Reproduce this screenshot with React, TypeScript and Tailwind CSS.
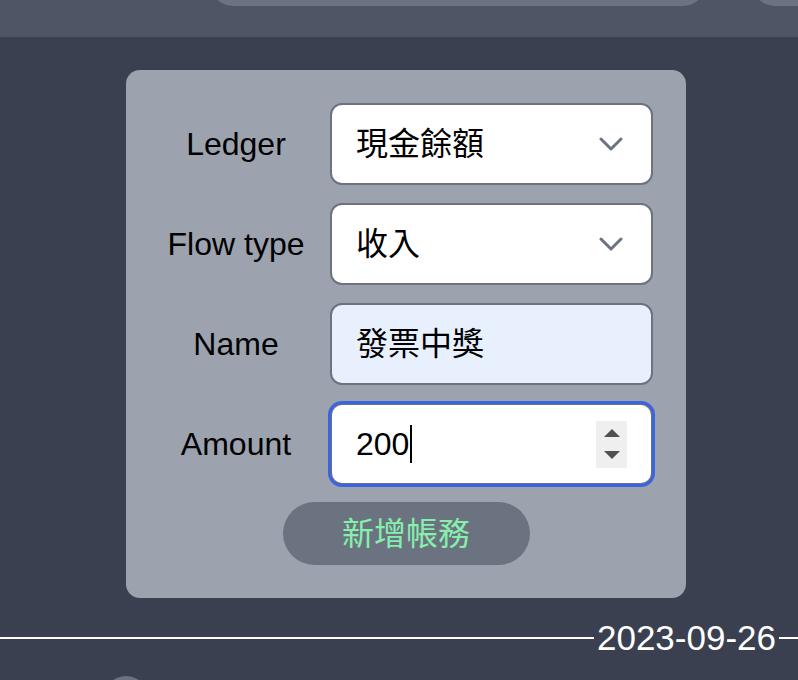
import React from 'react';

const font = { fontFamily: '"Liberation Sans", "Noto Sans CJK TC", sans-serif' };

const Chevron = () => (
    <svg width="24" height="14" viewBox="0 0 24 14" fill="none" className="shrink-0">
        <path d="M2 2l10 10L22 2" stroke="#6b7280" strokeWidth="3" strokeLinecap="round" strokeLinejoin="round" />
    </svg>
);

const Spinner = () => (
    <div className="w-[31px] h-[47px] bg-[#efefef] flex flex-col items-center justify-center gap-[14px]">
        <svg width="16" height="8" viewBox="0 0 16 8"><path d="M8 0L16 8H0z" fill="#505050" /></svg>
        <svg width="16" height="8" viewBox="0 0 16 8"><path d="M0 0h16L8 8z" fill="#505050" /></svg>
    </div>
);

const Row: React.FC<{ label: string; children: React.ReactNode }> = ({ label, children }) => (
    <div className="flex items-center">
        <div className="w-[188px] text-center text-[32px] text-black">{label}</div>
        {children}
    </div>
);

const App: React.FC = () => {
    return (
        <div className="w-[798px] h-[680px] bg-[#3a4050] overflow-hidden relative" style={font}>
            {/* top bar */}
            <div className="h-[37px] bg-[#4e5564] relative overflow-hidden">
                <div className="absolute left-[210px] top-[-40px] w-[496px] h-[46px] rounded-[24px] bg-[#6b7280]" />
                <div className="absolute left-[752px] top-[-40px] w-[120px] h-[46px] rounded-[24px] bg-[#6b7280]" />
            </div>

            <div className="flex justify-center pt-[33px] pl-[14px]">
                <div className="w-[560px] bg-[#9ca3af] rounded-[14px] pt-[33px] pb-[33px] pl-[16px] pr-[33px] flex flex-col">
                    <div className="flex flex-col gap-[18px]">
                        <Row label="Ledger">
                            <div className="flex-1 h-[82px] bg-white border-2 border-[#6b7280] rounded-[12px] flex items-center justify-between pl-[24px] pr-[28px]">
                                <span className="text-[32px] text-black">現金餘額</span>
                                <Chevron />
                            </div>
                        </Row>
                        <Row label="Flow type">
                            <div className="flex-1 h-[82px] bg-white border-2 border-[#6b7280] rounded-[12px] flex items-center justify-between pl-[24px] pr-[28px]">
                                <span className="text-[32px] text-black">收入</span>
                                <Chevron />
                            </div>
                        </Row>
                        <Row label="Name">
                            <div className="flex-1 h-[82px] bg-[#e8f0fe] border-2 border-[#6b7280] rounded-[12px] flex items-center pl-[24px]">
                                <span className="text-[32px] text-black">發票中獎</span>
                            </div>
                        </Row>
                        <Row label="Amount">
                            <div className="flex-1 h-[82px] bg-white border-2 border-[#6b7280] outline-[3px] outline-solid outline-offset-[-1px] outline-[#3b65e0] rounded-[12px] flex items-center justify-between pl-[24px] pr-[24px]">
                                <span className="text-[32px] text-black flex items-center leading-none">
                                    200<span className="inline-block w-[2px] h-[38px] bg-black ml-[1px]" />
                                </span>
                                <Spinner />
                            </div>
                        </Row>
                    </div>
                    <div className="flex justify-center mt-[17px] pl-[17px]">
                        <button className="w-[247px] h-[63px] rounded-full bg-[#6b7280] text-[#86efac] text-[32px]">
                            新增帳務
                        </button>
                    </div>
                </div>
            </div>

            {/* date divider */}
            <div className="flex items-center mt-[22px]">
                <div className="flex-1 h-[2px] bg-white" />
                <span className="text-[35px] text-white leading-none px-[3px]">2023-09-26</span>
                <div className="w-[19px] h-[2px] bg-white" />
            </div>

            <div className="absolute left-[104px] top-[676px] w-[44px] h-[44px] rounded-full bg-[#6b7280]" />
        </div>
    );
};

export default App;
